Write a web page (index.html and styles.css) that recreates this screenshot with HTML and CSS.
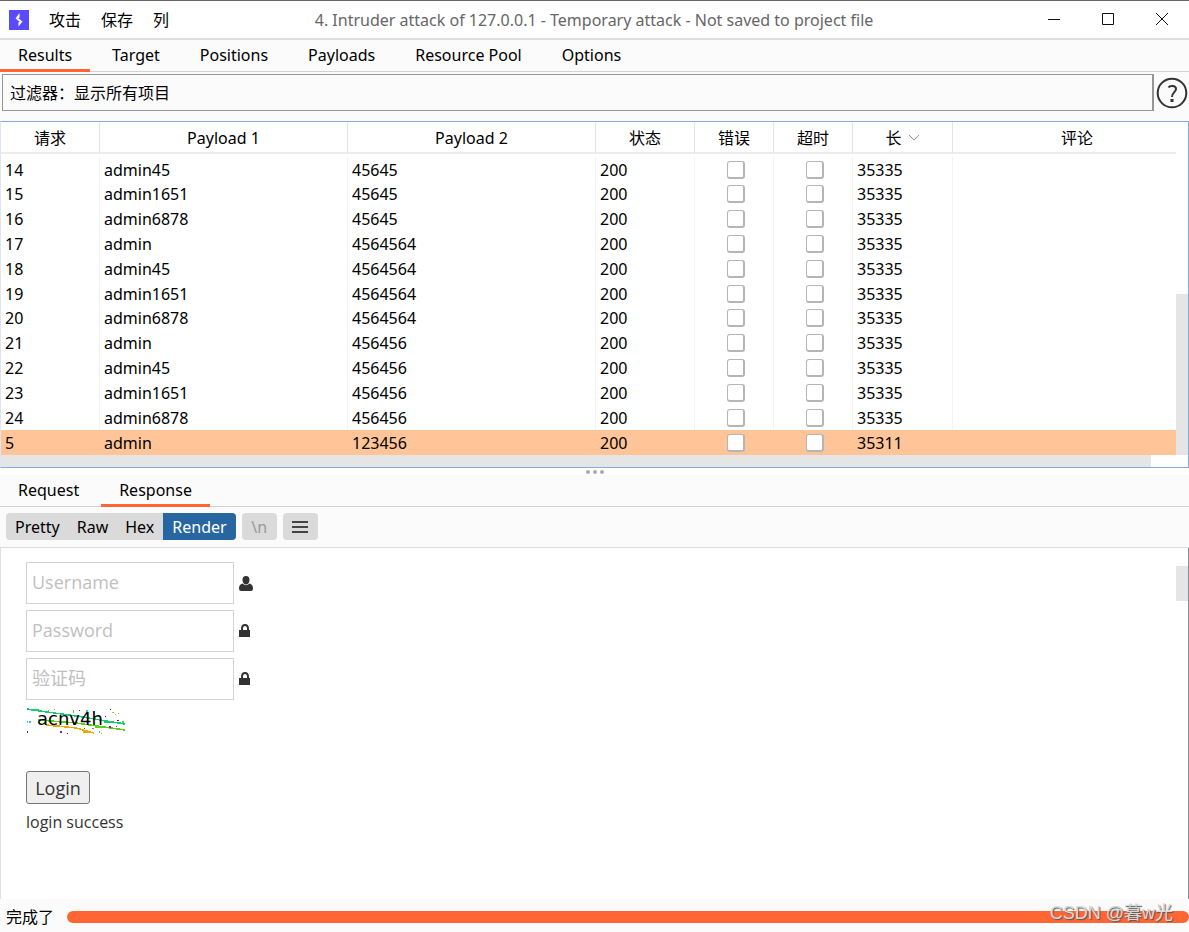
FILE: index.html
```html
<!DOCTYPE html>
<html lang="zh-CN">
<head>
<meta charset="utf-8">
<title>Intruder attack</title>
<link rel="stylesheet" href="styles.css">
</head>
<body>
<header class="titlebar">
  <svg class="logo" viewBox="0 0 20 20" aria-hidden="true"><rect width="20" height="20" fill="#5b4bff"/><path d="M10.500 3V8H9L13.500 11.500 9.500 16.500V12H11L6.500 8.500z" fill="#fff"/></svg>
  <nav class="menu"><button>攻击</button><button>保存</button><button>列</button></nav>
  <h1 class="title">4. Intruder attack of 127.0.0.1 - Temporary attack - Not saved to project file</h1>
  <div class="window-buttons">
    <button aria-label="Minimize"><svg viewBox="0 0 14 14"><path d="M1 6.500h12"/></svg></button>
    <button aria-label="Maximize"><svg viewBox="0 0 14 14"><path d="M1.500 .5h11v11h-11z"/></svg></button>
    <button aria-label="Close"><svg viewBox="0 0 14 14"><path d="M1 0l12 12M13 0L1 12"/></svg></button>
  </div>
</header>
<nav class="tabs main-tabs">
  <button class="tab active">Results</button><button class="tab">Target</button><button class="tab">Positions</button><button class="tab">Payloads</button><button class="tab">Resource Pool</button><button class="tab">Options</button>
</nav>
<div class="filter-row">
  <button class="filter">过滤器：显示所有项目</button>
  <button class="help" aria-label="Help"><svg viewBox="0 0 32 32"><circle cx="16" cy="16" r="14.300"/><path d="M12.500 10.500c1-2 7.500-2.500 7.500 1.500 0 3-4 3.500-4 8"/><path d="M16 22v3" stroke-width="3"/></svg></button>
</div>
<section class="results">
  <div class="results-main">
    <table>
      <colgroup><col class="c-id"><col class="c-payload"><col class="c-payload"><col class="c-status"><col class="c-flag"><col class="c-flag"><col class="c-length"><col></colgroup>
      <thead><tr><th>请求</th><th>Payload 1</th><th>Payload 2</th><th>状态</th><th>错误</th><th>超时</th><th><span class="sort">长<svg viewBox="0 0 12 8"><path d="M1 1l5 5 5-5"/></svg></span></th><th>评论</th></tr></thead>
      <tbody>
        <tr><td>14</td><td>admin45</td><td>45645</td><td>200</td><td><input type="checkbox" aria-label="错误"></td><td><input type="checkbox" aria-label="超时"></td><td>35335</td><td></td></tr>
        <tr><td>15</td><td>admin1651</td><td>45645</td><td>200</td><td><input type="checkbox" aria-label="错误"></td><td><input type="checkbox" aria-label="超时"></td><td>35335</td><td></td></tr>
        <tr><td>16</td><td>admin6878</td><td>45645</td><td>200</td><td><input type="checkbox" aria-label="错误"></td><td><input type="checkbox" aria-label="超时"></td><td>35335</td><td></td></tr>
        <tr><td>17</td><td>admin</td><td>4564564</td><td>200</td><td><input type="checkbox" aria-label="错误"></td><td><input type="checkbox" aria-label="超时"></td><td>35335</td><td></td></tr>
        <tr><td>18</td><td>admin45</td><td>4564564</td><td>200</td><td><input type="checkbox" aria-label="错误"></td><td><input type="checkbox" aria-label="超时"></td><td>35335</td><td></td></tr>
        <tr><td>19</td><td>admin1651</td><td>4564564</td><td>200</td><td><input type="checkbox" aria-label="错误"></td><td><input type="checkbox" aria-label="超时"></td><td>35335</td><td></td></tr>
        <tr><td>20</td><td>admin6878</td><td>4564564</td><td>200</td><td><input type="checkbox" aria-label="错误"></td><td><input type="checkbox" aria-label="超时"></td><td>35335</td><td></td></tr>
        <tr><td>21</td><td>admin</td><td>456456</td><td>200</td><td><input type="checkbox" aria-label="错误"></td><td><input type="checkbox" aria-label="超时"></td><td>35335</td><td></td></tr>
        <tr><td>22</td><td>admin45</td><td>456456</td><td>200</td><td><input type="checkbox" aria-label="错误"></td><td><input type="checkbox" aria-label="超时"></td><td>35335</td><td></td></tr>
        <tr><td>23</td><td>admin1651</td><td>456456</td><td>200</td><td><input type="checkbox" aria-label="错误"></td><td><input type="checkbox" aria-label="超时"></td><td>35335</td><td></td></tr>
        <tr><td>24</td><td>admin6878</td><td>456456</td><td>200</td><td><input type="checkbox" aria-label="错误"></td><td><input type="checkbox" aria-label="超时"></td><td>35335</td><td></td></tr>
        <tr class="selected"><td>5</td><td>admin</td><td>123456</td><td>200</td><td><input type="checkbox" aria-label="错误"></td><td><input type="checkbox" aria-label="超时"></td><td>35311</td><td></td></tr>
      </tbody>
    </table>
    <div class="vscroll"><div class="vthumb"></div></div>
  </div>
  <div class="hscroll"><div class="hthumb"></div></div>
</section>
<div class="splitter"><i></i><i></i><i></i></div>
<nav class="tabs message-tabs">
  <button class="tab">Request</button><button class="tab active">Response</button>
</nav>
<div class="toolbar">
  <div class="segments"><button>Pretty</button><button>Raw</button><button>Hex</button><button class="active">Render</button></div>
  <button class="tool" disabled>\n</button>
  <button class="tool" aria-label="Menu"><svg viewBox="0 0 16 12"><path d="M0 1h16M0 6h16M0 11h16"/></svg></button>
</div>
<main class="render">
  <form class="login">
    <div class="field"><input type="text" placeholder="Username" aria-label="Username"><svg viewBox="0 0 14 15"><path d="M7 0C4.500 0 3.500 1.500 3.500 4S5 8.500 7 8.500 10.500 6.500 10.500 4 9.500 0 7 0zM3.500 7.500C1 8 0 10 0 12.500Q0 15 2 15H12Q14 15 14 12.500C14 10 13 8 10.500 7.500Q7 11 3.500 7.500z"/></svg></div>
    <div class="field"><input type="password" placeholder="Password" aria-label="Password"><svg viewBox="0 0 14 15"><path fill-rule="evenodd" d="M2 6V5Q2 0 6 0T10 5V6H11V13H0V6zM4 6H8V5Q8 2 6 2T4 5z"/></svg></div>
    <div class="field"><input type="text" placeholder="验证码" aria-label="验证码"><svg viewBox="0 0 14 15"><path fill-rule="evenodd" d="M2 6V5Q2 0 6 0T10 5V6H11V13H0V6zM4 6H8V5Q8 2 6 2T4 5z"/></svg></div>
    <svg class="captcha" viewBox="0 0 100 26">
      <g fill="none" shape-rendering="crispEdges">
        <path d="M1 1L14 3 50 8 99 16" stroke="#14cc70" stroke-width="1.500"/>
        <path d="M12 12L50 15 99 22" stroke="#5bd01a" stroke-width="1.500"/>
        <path d="M20 17L50 20 68 25" stroke="#e8ad00" stroke-width="1.500"/>
        <path d="M5 2h8M78 14h8" stroke="#14cc70" stroke-width="2"/>
        <path d="M33 14h9M69 19h8" stroke="#5bd01a" stroke-width="2"/>
        <path d="M27 18h7M57 24h7" stroke="#e8ad00" stroke-width="2"/>
      </g>
      <g shape-rendering="crispEdges"><path fill="#8420a0" d="M34 23h2v2h-2zM41 25h1v1h-1zM58 20h1v1h-1zM83 18h2v2h-2zM90 18h1v1h-1z"/><path fill="#20cddd" d="M60 2h2v2h-2zM67 4h1v1h-1zM1 13h1v2H1zM3 13h2v2H3z"/><path fill="#532040" d="M1 23h1v2H1zM79 8h1v1h-1zM84 1h1v1h-1zM91 12h2v1h-2zM53 2h1v1h-1z"/><path fill="#54c93c" d="M47 2h1v3h-1zM73 23h1v2h-1zM92 5h1v1h-1zM96 13h2v2h-2zM28 1h1v1h-1z"/><path fill="#dca72b" d="M86 4h2v1h-2zM89 6h1v1h-1zM22 2h1v1h-1zM75 25h1v1h-1z"/><path fill="#e96080" d="M46 13h2v2h-2zM66 20h2v1h-2z"/></g>
      <text x="11" y="17">acnv4h</text>
    </svg>
    <button class="submit" type="button">Login</button>
    <p>login success</p>
  </form>
  <div class="page-scroll"></div>
</main>
<footer class="status"><label for="progress">完成了</label><progress id="progress" value="100" max="100"></progress><span class="watermark">CSDN @暮w光</span></footer>
</body>
</html>
```
FILE: styles.css
```css
* { box-sizing: border-box; }
body { margin: 0; min-height: 100vh; display: flex; flex-direction: column; background: #fbfbfb; color: #000; font: 16px/24px "Noto Sans", "Noto Sans CJK SC", sans-serif; }
button, input { font: inherit; color: inherit; }
button { border: 0; padding: 0; background: none; white-space: nowrap; }
svg { display: block; }

.titlebar { display: flex; align-items: center; height: 40px; border-top: 1px solid #666; border-bottom: 2px solid #dedede; background: #fff; padding: 0 14px 0 9px; }
.logo { width: 20px; height: 20px; flex: none; }
.menu { display: flex; gap: 20px; margin-left: 20px; }
.title { flex: 1; margin: 0 22px 0 0; font-size: 16px; font-weight: 400; color: #666; text-align: center; white-space: nowrap; }
.window-buttons { display: flex; gap: 28px; }
.window-buttons button { width: 26px; height: 24px; display: grid; place-items: center; }
.window-buttons svg { width: 14px; height: 14px; fill: none; stroke: #111; }

.tabs { display: flex; height: 32px; border-bottom: 1px solid #d0d3d3; }
.tab { height: 32px; padding: 0 18px; border-bottom: 3px solid transparent; }
.tab.active { border-bottom-color: #ff6633; }
.main-tabs { gap: 4px; }
.message-tabs { gap: 4px; }

.filter-row { display: flex; align-items: center; gap: 2px; padding: 2px 1px 10px 2px; }
.filter { flex: 1; height: 37px; padding: 0 7px; border: 1px solid #969696; border-right-width: 2px; text-align: left; }
.help svg { width: 32px; height: 32px; fill: none; stroke: #333; stroke-width: 2; }

.results { border: 1px solid #86abd6; border-left-color: #dce6f5; background: #fff; }
.results-main { display: flex; }
table { flex: 1; height: 333px; table-layout: fixed; border-spacing: 0; border-collapse: separate; }
.c-id { width: 99px; }
.c-payload { width: 248px; }
.c-status { width: 99px; }
.c-flag { width: 79px; }
.c-length { width: 100px; }
th { height: 32px; padding: 1px 0 0; font-weight: 400; border-bottom: 2px solid #ececec; border-right: 1px solid #e3e3e3; }
th:last-child { border-right: 0; padding-left: 25px; }
.sort { display: flex; align-items: center; justify-content: center; gap: 6px; }
.sort svg { width: 12px; height: 8px; fill: none; stroke: #999; }
tbody::before { content: ""; display: table-row; height: 3px; }
td { height: 24px; padding: 0 4px; line-height: 24px; border-right: 1px solid #f3f3f3; }
td:last-child { border-right: 0; }
.selected td { background: #ffc599; border-color: #ffc599; }
td:has(input) { padding: 0 2px 0 6px; }
td input { appearance: none; display: block; width: 18px; height: 18px; margin: 0 auto; border: 2px solid #b5b5b5; border-width: 1px 2px 2px 1px; border-radius: 3px; background: #fff; }
.vscroll { width: 12px; display: flex; flex-direction: column; justify-content: flex-end; }
.vthumb { height: 161px; background: #e5e5e5; }
.hscroll { height: 12px; padding-right: 37px; }
.hthumb { height: 12px; background: #e5e5e5; }
.splitter { display: flex; gap: 3px; justify-content: center; height: 7px; padding-top: 2px; background: #fff; }
.splitter i { width: 4px; height: 4px; border-radius: 50%; background: #aaa; }

.toolbar { display: flex; gap: 6px; height: 41px; padding: 6px; border-bottom: 1px solid #dcdde0; }
.segments { display: flex; gap: 1px; height: 27px; border-radius: 4px; background: #dadada; overflow: hidden; }
.segments button { padding: 0 8px; }
.segments button:first-child { padding-left: 9px; }
.segments .active { padding: 0 9px; background: #2766a0; color: #fff; }
.tool { display: grid; place-items: center; width: 35px; height: 27px; border-radius: 4px; background: #dadada; }
.tool:disabled { color: #999; }
.tool svg { width: 16px; height: 12px; stroke: #444; stroke-width: 2; }

.render { flex: 1; display: flex; justify-content: space-between; border-left: 1px solid #dedee5; border-right: 1px solid #8b8b93; background: #fff; }
.login { padding: 14px 25px; color: #333; font-family: "Open Sans", "Noto Sans CJK SC", sans-serif; }
.field { display: flex; align-items: center; gap: 5px; margin-bottom: 6px; }
.field input { width: 208px; height: 42px; padding: 0 5px 2px; border: 1px solid #d3d3d3; font-size: 18px; }
.field input::placeholder { color: #bfbfbf; opacity: 1; }
.field svg { width: 14px; height: 15px; fill: #333; }
.captcha { width: 100px; height: 26px; margin-top: 8px; }
.captcha text { font: 18px "DejaVu Sans", sans-serif; fill: #000; }
.submit { display: block; width: 64px; height: 33px; margin-top: 37px; border: 1px solid #767676; border-radius: 3px; background: #efefef; font-size: 18px; }
.login p { margin: 6px 0 0; }
.page-scroll { width: 12px; height: 35px; margin-top: 18px; background: #e5e5e5; }

.status { position: relative; display: flex; align-items: center; gap: 13px; height: 33px; padding: 2px 0 0 6px; }
progress { appearance: none; flex: 1; min-width: 0; height: 12px; border: 0; border-radius: 6px; overflow: hidden; }
progress::-webkit-progress-bar { background: #eee; }
progress::-webkit-progress-value { background: #ff6633; }
.watermark { position: absolute; right: 16px; top: 1px; font: 18px/26px "Liberation Sans", "Noto Sans CJK SC", sans-serif; color: #d8d8d8; text-shadow: 1px 1px 1px #555; }
```
